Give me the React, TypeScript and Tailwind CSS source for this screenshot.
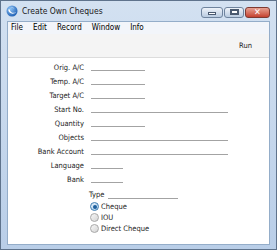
import React from "react";

const font = { fontFamily: '"DejaVu Sans Condensed", "DejaVu Sans", sans-serif' };

const fields: { label: string; width: string }[] = [
  { label: "Orig. A/C", width: "w-[54px]" },
  { label: "Temp. A/C", width: "w-[54px]" },
  { label: "Target A/C", width: "w-[54px]" },
  { label: "Start No.", width: "w-[137px]" },
  { label: "Quantity", width: "w-[54px]" },
  { label: "Objects", width: "w-[137px]" },
  { label: "Bank Account", width: "w-[137px]" },
  { label: "Language", width: "w-[32px]" },
  { label: "Bank", width: "w-[32px]" },
];

function AppIcon() {
  return (
    <svg width="12" height="12" viewBox="0 0 12 12">
      <defs>
        <radialGradient id="g" cx="35%" cy="30%" r="75%">
          <stop offset="0%" stopColor="#8fc3f5" />
          <stop offset="100%" stopColor="#1d5fb4" />
        </radialGradient>
      </defs>
      <circle cx="6" cy="6" r="5.5" fill="url(#g)" />
      <path d="M2.2 4.5 C2.5 8.5 7 10 10.2 7.2 C7.5 8.6 4.2 7.8 3.6 4.2 Z" fill="#fff" />
      <path d="M4.5 2.6 C6 2.1 7.6 2.5 8.6 3.6 C7.2 3.1 5.8 3 4.5 2.6 Z" fill="#fff" opacity="0.8" />
    </svg>
  );
}

function Radio({ checked, label }: { checked?: boolean; label: string }) {
  return (
    <div className="flex items-center h-[11px] gap-[2px] pl-[82px]">
      <div
        className={
          checked
            ? "w-[9px] h-[9px] rounded-full border border-[#3f7fb4] bg-gradient-to-br from-[#e8f3fc] to-[#a9cbe8] flex items-center justify-center"
            : "w-[9px] h-[9px] rounded-full border border-[#a8a8a8] bg-gradient-to-br from-[#f7f7f7] to-[#d4d4d4]"
        }
      >
        {checked && <div className="w-[4px] h-[4px] rounded-full bg-[#1c5f9e]" />}
      </div>
      <span className="text-[7.5px] leading-[11px] text-[#1c1c1c]">{label}</span>
    </div>
  );
}

export default function App() {
  return (
    <div
      className="w-[277px] h-[250px] border border-[#5f738c] bg-gradient-to-b from-[#d3e1f1] to-[#b9cee8] flex flex-col"
      style={font}
    >
      {/* title bar */}
      <div className="h-[20px] flex items-center pl-[5px] pr-[6px]">
        <AppIcon />
        <span className="ml-[4px] text-[8.5px] text-[#1a1a1a]">Create Own Cheques</span>
        <div className="ml-auto flex items-center gap-[1px] mt-[2px]">
          <div className="w-[22px] h-[11px] rounded-[3px] border border-[#6f849e] bg-gradient-to-b from-[#eef3f9] to-[#b9cbe0] flex items-end justify-center pb-[2px]">
            <div className="w-[8px] h-[3px] bg-white border border-[#4a5a70]" />
          </div>
          <div className="w-[20px] h-[11px] rounded-[3px] border border-[#6f849e] bg-gradient-to-b from-[#eef3f9] to-[#b9cbe0] flex items-center justify-center">
            <div className="w-[9px] h-[6px] border-[2px] border-[#4a5a70] bg-white" />
          </div>
          <div className="w-[25px] h-[11px] rounded-[3px] border border-[#7e3a32] bg-gradient-to-b from-[#e6a092] to-[#c4402f] flex items-center justify-center">
            <span className="text-white text-[9px] leading-[9px] font-bold">✕</span>
          </div>
        </div>
      </div>

      {/* client area */}
      <div className="mx-[6px] mb-[4px] flex-1 border border-[#94adc9] flex flex-col">
        <div className="h-[12px] bg-[#f2f5fa] flex items-center gap-[10px] pl-[3px] text-[8px] leading-[12px] text-black">
          <span>File</span>
          <span>Edit</span>
          <span>Record</span>
          <span>Window</span>
          <span>Info</span>
        </div>
        <div className="h-[24px] bg-[#f4f4f4] border-b border-[#dcdcdc] flex items-center justify-end pr-[17px]">
          <span className="text-[7.5px] text-[#1c1c1c]">Run</span>
        </div>
        <div className="flex-1 bg-white pt-[3px]">
          {fields.map((f) => (
            <div key={f.label} className="flex items-center h-[14px]">
              <span className="w-[76px] text-right text-[7.5px] leading-[14px] text-[#1c1c1c]">
                {f.label}
              </span>
              <div className={`ml-[7px] h-[6px] border-b border-[#a3a3a3] ${f.width}`} />
            </div>
          ))}
          <div className="flex items-center h-[12px] mt-[2px] pl-[81px]">
            <span className="text-[7.5px] leading-[12px] text-[#1c1c1c]">Type</span>
            <div className="ml-[4px] w-[70px] h-[7px] border-b border-[#a3a3a3]" />
          </div>
          <Radio checked label="Cheque" />
          <Radio label="IOU" />
          <Radio label="Direct Cheque" />
        </div>
      </div>
    </div>
  );
}
